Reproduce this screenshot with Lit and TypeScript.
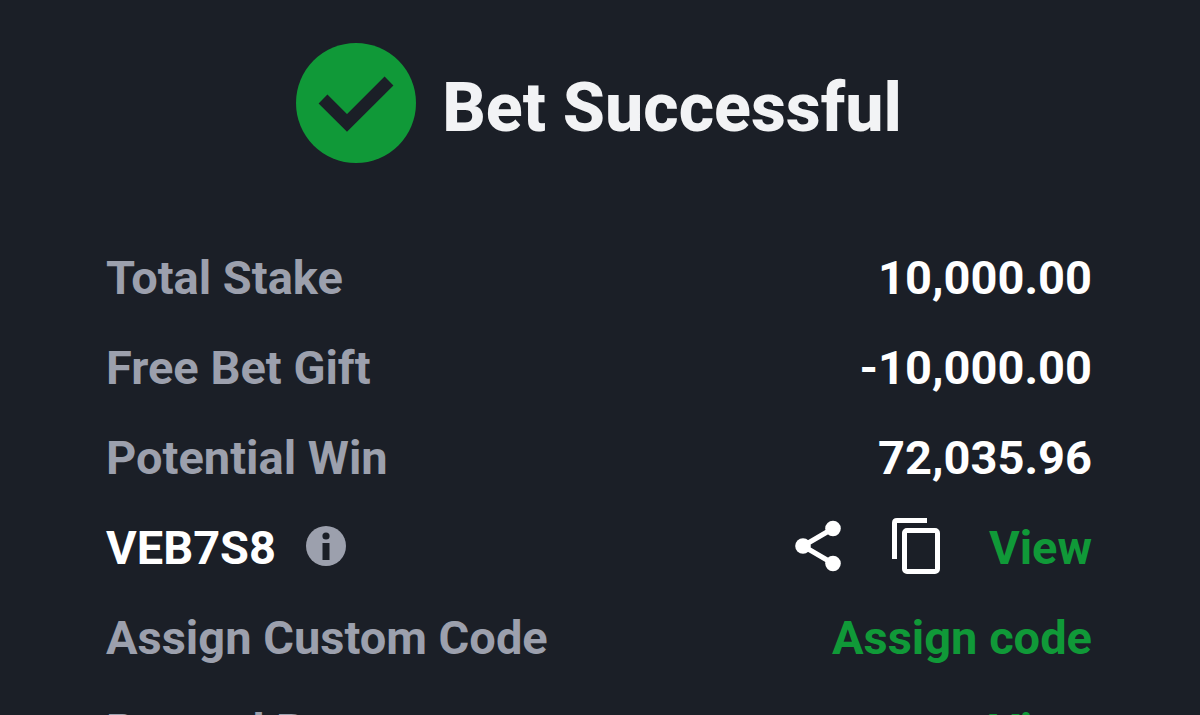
import { LitElement, html, css, svg } from "lit";
import { customElement } from "lit/decorators.js";

const checkIcon = svg`<svg class="check" viewBox="0 0 120 120" aria-hidden="true">
  <circle cx="60" cy="60" r="60" fill="#109938"/>
  <path d="M27 56 L51 80 L93 38" fill="none" stroke="#1b1f27" stroke-width="12.500"/>
</svg>`;

const infoIcon = svg`<svg viewBox="0 0 40 40" width="40" height="40" aria-hidden="true">
  <circle cx="20" cy="20" r="20" fill="#9ca0ad"/>
  <circle cx="20" cy="10" r="3.600" fill="#1b1f27"/>
  <rect x="16.500" y="17" width="7" height="17" fill="#1b1f27"/>
</svg>`;

const shareIcon = svg`<svg viewBox="0 0 48 52" width="48" height="52" aria-hidden="true">
  <path d="M38 8.500 L8 26 L38 43.500" fill="none" stroke="#fff" stroke-width="5"/>
  <circle cx="38" cy="8.500" r="7.800" fill="#fff"/>
  <circle cx="8" cy="26" r="7.800" fill="#fff"/>
  <circle cx="38" cy="43.500" r="7.800" fill="#fff"/>
</svg>`;

const copyIcon = svg`<svg viewBox="0 0 50 58" width="50" height="58" aria-hidden="true">
  <path d="M3.500 42 V6 Q3.500 3.500 6 3.500 H36" fill="none" stroke="#fff" stroke-width="5"/>
  <rect x="13.500" y="13.500" width="33" height="41" rx="2.500" fill="none" stroke="#fff" stroke-width="5"/>
</svg>`;

@customElement("app-root")
export class AppRoot extends LitElement {
  static styles = css`
    :host {
      display: block;
      box-sizing: border-box;
      height: 100vh;
      overflow: hidden;
      padding: 43px 108px 0 106px;
      background: #1b1f27;
      color: #fff;
      font-family: Roboto, "Liberation Sans", sans-serif;
      font-size: 47px;
      font-weight: 700;
      line-height: 56px;
    }
    .head {
      display: flex;
      align-items: center;
      justify-content: center;
      gap: 26px;
      margin-bottom: 70px;
    }
    .check {
      width: 120px;
      height: 120px;
      flex: none;
    }
    .title {
      margin: 0;
      padding-top: 10px;
      color: #f2f3f5;
      font-size: 68px;
      font-weight: 800;
      line-height: 80px;
    }
    .list {
      margin: 0;
    }
    .row {
      display: flex;
      align-items: center;
      justify-content: space-between;
      height: 90px;
    }
    .row:last-child {
      margin-top: 3px;
    }
    .label {
      color: #9ca0ad;
    }
    .value {
      margin: 0;
    }
    .code,
    .actions {
      display: flex;
      align-items: center;
    }
    .code {
      gap: 30px;
    }
    .actions {
      gap: 48px;
    }
    .icon {
      display: flex;
      padding: 0 0 4px;
      border: 0;
      background: none;
      cursor: pointer;
    }
    .icon svg {
      display: block;
    }
    .link {
      color: #109938;
      text-decoration: none;
    }
  `;

  render() {
    return html`
      <header class="head">
        ${checkIcon}
        <h1 class="title">Bet Successful</h1>
      </header>
      <dl class="list">
        <div class="row"><dt class="label">Total Stake</dt><dd class="value">10,000.00</dd></div>
        <div class="row"><dt class="label">Free Bet Gift</dt><dd class="value">-10,000.00</dd></div>
        <div class="row"><dt class="label">Potential Win</dt><dd class="value">72,035.96</dd></div>
        <div class="row">
          <dt class="code">VEB7S8<button class="icon" aria-label="Info">${infoIcon}</button></dt>
          <dd class="value actions">
            <button class="icon" aria-label="Share">${shareIcon}</button>
            <button class="icon" aria-label="Copy">${copyIcon}</button>
            <a class="link" href="#">View</a>
          </dd>
        </div>
        <div class="row"><dt class="label">Assign Custom Code</dt><dd class="value"><a class="link" href="#">Assign code</a></dd></div>
        <div class="row"><dt class="label">Reward Bonus</dt><dd class="value"><a class="link" href="#">View</a></dd></div>
      </dl>
    `;
  }
}
